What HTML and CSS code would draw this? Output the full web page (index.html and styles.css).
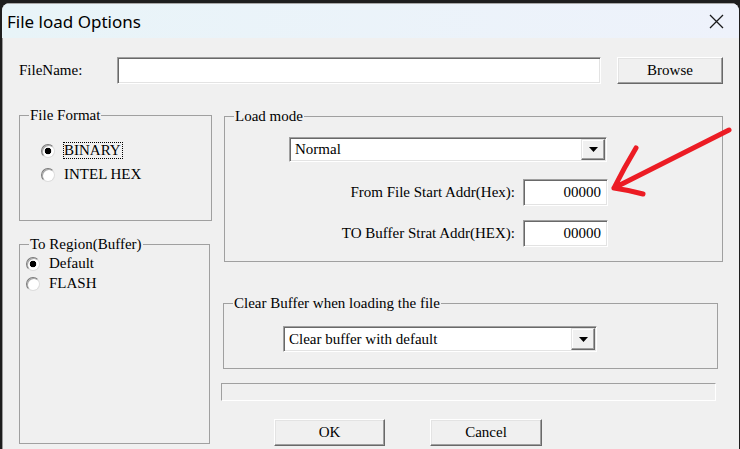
FILE: index.html
```html
<!DOCTYPE html>
<html>
<head>
<meta charset="utf-8">
<link rel="stylesheet" href="styles.css">
</head>
<body>
<div class="window">
  <div class="titlebar">
    <span class="title">File load Options</span>
    <svg class="close" width="15" height="15" viewBox="0 0 15 15"><path d="M1 1 L14 14 M14 1 L1 14" stroke="#1a1a1a" stroke-width="1.3" fill="none"/></svg>
  </div>
  <div class="content">
    <div class="file-row">
      <span class="file-label">FileName:</span>
      <div class="textbox file-input"></div>
      <button class="btn browse">Browse</button>
    </div>
    <div class="main">
      <div class="left-col">
        <fieldset class="group fmt">
          <legend>File Format</legend>
          <div class="radio-list fmt-list">
            <div class="radio-row"><span class="radio checked"></span><span class="radio-text focus">BINARY</span></div>
            <div class="radio-row"><span class="radio"></span><span class="radio-text">INTEL HEX</span></div>
          </div>
        </fieldset>
        <fieldset class="group region">
          <legend>To Region(Buffer)</legend>
          <div class="radio-list region-list">
            <div class="radio-row"><span class="radio checked"></span><span class="radio-text">Default</span></div>
            <div class="radio-row"><span class="radio"></span><span class="radio-text">FLASH</span></div>
          </div>
        </fieldset>
      </div>
      <div class="right-col">
        <fieldset class="group load">
          <legend>Load mode</legend>
          <div class="combo combo-normal">
            <span class="combo-text">Normal</span>
            <span class="combo-btn"><svg width="9" height="5" viewBox="0 0 9 5"><path d="M0 0 H9 L4.5 5 Z" fill="#000"/></svg></span>
          </div>
          <div class="addr-row first">
            <span class="addr-label">From File Start Addr(Hex):</span>
            <div class="textbox addr">00000</div>
          </div>
          <div class="addr-row">
            <span class="addr-label">TO Buffer Strat Addr(HEX):</span>
            <div class="textbox addr">00000</div>
          </div>
        </fieldset>
        <fieldset class="group clear">
          <legend>Clear Buffer when loading the file</legend>
          <div class="combo combo-clear">
            <span class="combo-text">Clear buffer with default</span>
            <span class="combo-btn"><svg width="9" height="5" viewBox="0 0 9 5"><path d="M0 0 H9 L4.5 5 Z" fill="#000"/></svg></span>
          </div>
        </fieldset>
        <div class="progress"></div>
        <div class="buttons">
          <button class="btn ok">OK</button>
          <button class="btn cancel">Cancel</button>
        </div>
      </div>
    </div>
  </div>
</div>
<svg class="annotation" width="740" height="449" viewBox="0 0 740 449">
  <path d="M729 130 L614 188 M614 188 Q624 168 636 148 M614 188 Q628 190 643 194" stroke="#ec1c24" stroke-width="5" stroke-linecap="round" stroke-linejoin="round" fill="none"/>
</svg>
</body>
</html>
```

FILE: styles.css
```css
html, body {
  margin: 0;
  padding: 0;
}
body {
  background: #1e1e1e;
  width: 740px;
  height: 449px;
  overflow: hidden;
  font-family: "Liberation Serif", "Times New Roman", serif;
  font-size: 15px;
  color: #000;
}
.window {
  margin: 3px 1px 0 2px;
  height: 446px;
  background: #f0f0f0;
  border-radius: 8px 8px 0 0;
  overflow: hidden;
  box-shadow: inset 1px 1px 0 #9a9a9a;
}
.titlebar {
  height: 35px;
  display: flex;
  align-items: center;
  justify-content: space-between;
  padding: 0 15px 0 5px;
  background: linear-gradient(90deg, #e8f4f8, #eef2fb);
  border-top: 1px solid #a8a8a8;
  box-sizing: border-box;
}
.title {
  font-family: "Noto Sans", "Open Sans", sans-serif;
  font-size: 17px;
  color: #000;
}
.close {
  display: block;
}
.content {
  padding: 19px 0 0 17px;
}
.file-row {
  display: flex;
  align-items: center;
  height: 27px;
}
.file-label {
  width: 98px;
}
.textbox {
  box-sizing: border-box;
  background: #fff;
  border: 1px solid;
  border-color: #a0a0a0 #fff #fff #a0a0a0;
  box-shadow: inset 1px 1px 0 #696969, inset -1px -1px 0 #e3e3e3;
}
.file-input {
  width: 484px;
  height: 27px;
}
.btn {
  box-sizing: border-box;
  font-family: "Liberation Serif", "Times New Roman", serif;
  font-size: 15px;
  color: #000;
  background: #f0f0f0;
  border: 1px solid;
  border-color: #fff #696969 #696969 #fff;
  box-shadow: inset -1px -1px 0 #a0a0a0, inset 1px 1px 0 #e3e3e3;
  padding: 0;
  border-radius: 0;
}
.browse {
  margin-left: 16px;
  width: 106px;
  height: 27px;
}
.main {
  display: flex;
  align-items: flex-start;
  gap: 12px;
  margin-top: 23px;
}
.group {
  margin: 0;
  padding: 0;
  border: 1px solid #a0a0a0;
  box-sizing: border-box;
  min-width: 0;
}
.group legend {
  margin-left: 9px;
  padding: 0 1px;
  line-height: 17px;
}
.left-col {
  width: 193px;
}
.fmt {
  width: 193px;
  height: 114px;
}
.region {
  width: 191px;
  height: 208px;
  margin-top: 15px;
}
.radio-list {
  display: flex;
  flex-direction: column;
}
.fmt-list {
  padding: 18px 0 0 21px;
  gap: 7px;
}
.region-list {
  padding: 2px 0 0 6px;
  gap: 3px;
}
.radio-row {
  display: flex;
  align-items: center;
  height: 17px;
}
.radio {
  box-sizing: border-box;
  width: 14px;
  height: 14px;
  border-radius: 50%;
  border: 1px solid;
  border-color: #7a7a7a #dcdcdc #dcdcdc #7a7a7a;
  background: #fff;
  box-shadow: inset 1px 1px 0 #a8a8a8;
}
.radio.checked {
  background: radial-gradient(circle, #000 0 3px, #fff 3.6px);
}
.radio-text {
  margin-left: 8px;
  border: 1px dotted transparent;
  line-height: 15px;
  padding-right: 1px;
}
.radio-text.focus {
  border-color: #000;
}
.right-col {
  margin-top: 1px;
  width: 499px;
}
.load {
  width: 499px;
  height: 154px;
}
.combo {
  box-sizing: border-box;
  display: flex;
  align-items: stretch;
  background: #fff;
  border: 1px solid;
  border-color: #a0a0a0 #fff #fff #a0a0a0;
  box-shadow: inset 1px 1px 0 #696969, inset -1px -1px 0 #e3e3e3;
  padding: 2px;
}
.combo-text {
  flex: 1;
  display: flex;
  align-items: center;
  padding-left: 3px;
}
.combo-btn {
  box-sizing: border-box;
  width: 24px;
  display: flex;
  align-items: center;
  justify-content: center;
  background: #f0f0f0;
  border: 1px solid;
  border-color: #e3e3e3 #696969 #696969 #e3e3e3;
  box-shadow: inset -1px -1px 0 #a0a0a0, inset 1px 1px 0 #fff;
  margin: -1px -1px -1px 0;
}
.combo-btn svg {
  display: block;
}
.combo-normal {
  margin: 12px 0 0 64px;
  width: 318px;
  height: 25px;
}
.addr-row {
  display: flex;
  align-items: center;
  justify-content: flex-end;
  gap: 8px;
  padding-right: 114px;
  margin-top: 14px;
}
.addr-row.first {
  margin-top: 17px;
}
.addr {
  width: 85px;
  height: 27px;
  text-align: right;
  padding-right: 6px;
  line-height: 25px;
}
.clear {
  width: 495px;
  height: 74px;
  margin: 33px 0 0 -1px;
}
.combo-clear {
  margin: 14px 0 0 59px;
  width: 314px;
  height: 26px;
}
.progress {
  box-sizing: border-box;
  width: 495px;
  height: 18px;
  margin: 14px 0 0 -3px;
  border: 1px solid;
  border-color: #a0a0a0 #fff #fff #a0a0a0;
}
.buttons {
  display: flex;
  margin-top: 18px;
  padding-left: 50px;
  gap: 45px;
}
.ok {
  width: 111px;
  height: 27px;
}
.cancel {
  width: 112px;
  height: 27px;
}
.annotation {
  position: absolute;
  left: 0;
  top: 0;
  pointer-events: none;
}
```
